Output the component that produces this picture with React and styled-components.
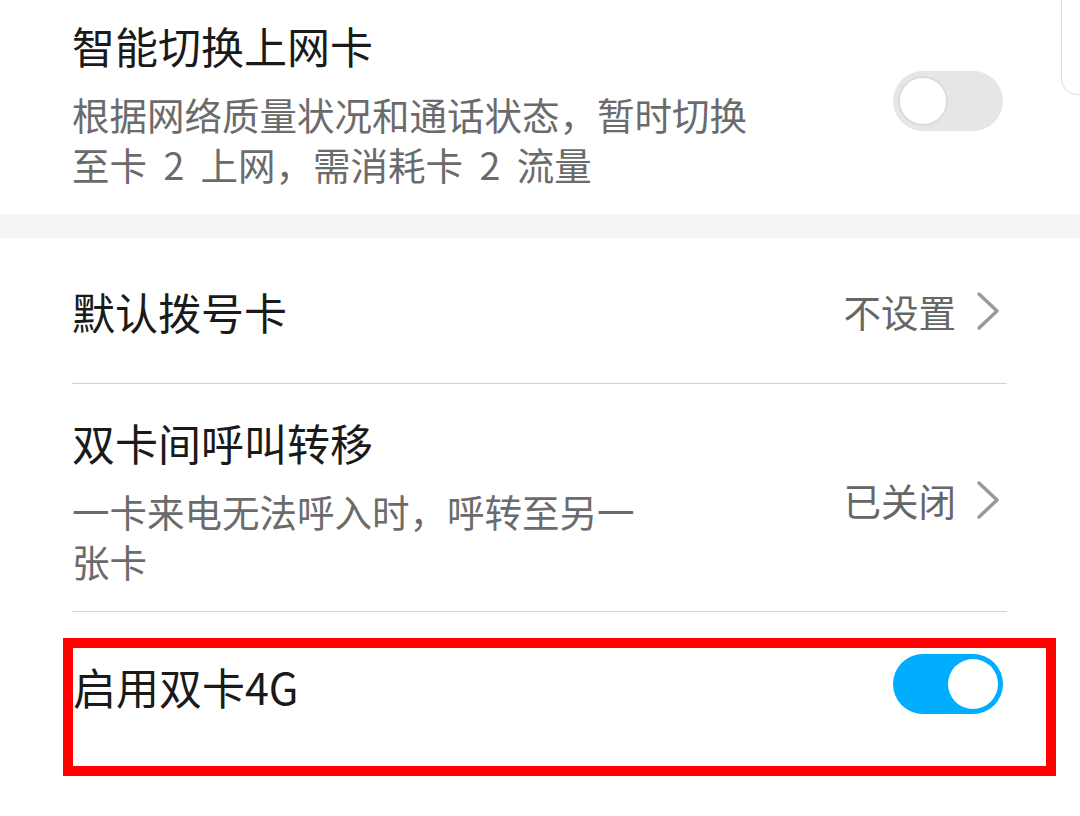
import React from "react";
import styled, { createGlobalStyle } from "styled-components";

const GlobalStyle = createGlobalStyle`
  html, body {
    margin: 0;
    padding: 0;
    background: #ffffff;
  }
  body {
    font-family: "Noto Sans CJK SC", "Noto Sans", sans-serif;
  }
`;

const Page = styled.div`
  position: relative;
  width: 1080px;
  height: 816px;
  overflow: hidden;
  background: #fff;
`;

const ScrollThumb = styled.div`
  position: absolute;
  top: -20px;
  left: 1061px;
  width: 40px;
  height: 113px;
  border: 1.5px solid #dcdcdc;
  border-radius: 16px;
  background: #fff;
`;

const Section = styled.div`
  display: flex;
  align-items: center;
  justify-content: space-between;
  padding: 17px 77px 25px 72px;
`;

const SectionToggle = styled.div`
  margin-bottom: 4px;
`;

const Band = styled.div`
  height: 24px;
  background: #f5f5f5;
`;

const Row = styled.div`
  display: flex;
  align-items: center;
  justify-content: space-between;
  margin: 0 73px 0 72px;
  min-height: ${(p) => p.$height || 0}px;
  padding: ${(p) => p.$pad || "0"};
  box-sizing: border-box;
  border-bottom: ${(p) => (p.$divider ? "1px solid #d2d2d2" : "none")};
`;

const TextBlock = styled.div`
  display: flex;
  flex-direction: column;
  gap: 16px;
`;

const Title = styled.div`
  font-size: 43px;
  line-height: 56px;
  color: #1a1a1a;
  white-space: nowrap;
`;

const Subtitle = styled.div`
  font-size: 37.5px;
  line-height: 50px;
  color: #6b6b6b;
  word-spacing: 8px;
  max-width: ${(p) => p.$maxWidth}px;
`;

const Value = styled.div`
  display: flex;
  align-items: center;
  gap: 20px;
  padding-right: 7px;
  font-size: 37.5px;
  line-height: 50px;
  color: #666;
  white-space: nowrap;
`;

const Track = styled.div`
  position: relative;
  flex: none;
  width: 110px;
  height: 60px;
  border-radius: 30px;
  background: ${(p) => (p.$on ? "#00adff" : "#e6e6e6")};
`;

const Knob = styled.div`
  position: absolute;
  top: 5px;
  left: ${(p) => (p.$on ? "55px" : "5px")};
  width: 50px;
  height: 50px;
  box-sizing: border-box;
  border-radius: 50%;
  background: #fff;
  border: ${(p) => (p.$on ? "none" : "2px solid #dcdcdc")};
`;

const Highlight = styled.div`
  display: flex;
  align-items: flex-start;
  justify-content: space-between;
  margin: 26px 24px 0 63px;
  height: 138px;
  box-sizing: border-box;
  border: 10px solid #ff0000;
  padding: 10px 43px 0 0;
`;

const HighlightToggle = styled.div`
  margin-top: -4px;
`;

const Switch = ({ on }) => (
  <Track $on={on}>
    <Knob $on={on} />
  </Track>
);

const Chevron = () => (
  <svg width="24" height="40" viewBox="0 0 24 40">
    <path
      d="M3 3 L21 20 L3 37"
      fill="none"
      stroke="#9a9a9a"
      strokeWidth="3.5"
      strokeLinecap="round"
      strokeLinejoin="round"
    />
  </svg>
);

export default function App() {
  return (
    <Page>
      <GlobalStyle />
      <ScrollThumb />
      <Section>
        <TextBlock>
          <Title>智能切换上网卡</Title>
          <Subtitle $maxWidth={700}>
            根据网络质量状况和通话状态，暂时切换至卡 2 上网，需消耗卡 2 流量
          </Subtitle>
        </TextBlock>
        <SectionToggle>
          <Switch on={false} />
        </SectionToggle>
      </Section>
      <Band />
      <Row $height={146} $divider>
        <Title>默认拨号卡</Title>
        <Value>
          不设置
          <Chevron />
        </Value>
      </Row>
      <Row $pad="30px 0 25px" $divider>
        <TextBlock>
          <Title>双卡间呼叫转移</Title>
          <Subtitle $maxWidth={580}>一卡来电无法呼入时，呼转至另一张卡</Subtitle>
        </TextBlock>
        <Value>
          已关闭
          <Chevron />
        </Value>
      </Row>
      <Highlight>
        <Title>启用双卡4G</Title>
        <HighlightToggle>
          <Switch on />
        </HighlightToggle>
      </Highlight>
    </Page>
  );
}
